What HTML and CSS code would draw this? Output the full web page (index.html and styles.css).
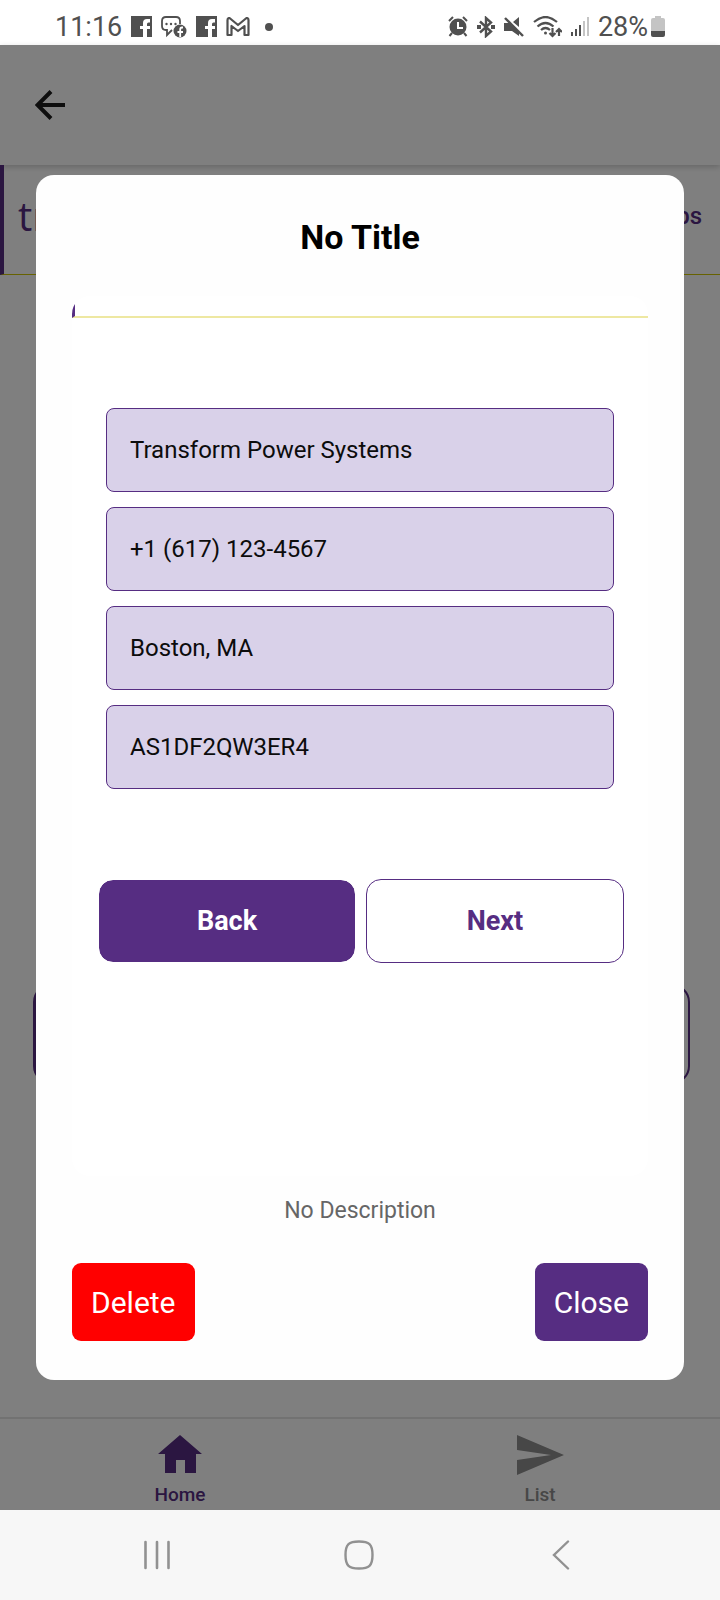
FILE: index.html
```html
<!DOCTYPE html>
<html lang="en">
<head>
<meta charset="utf-8">
<meta name="viewport" content="width=device-width, initial-scale=1">
<title>No Title</title>
<link rel="stylesheet" href="styles.css">
</head>
<body>
<div class="screen">
  <header class="status">
    <div class="status-group">
      <span class="status-text">11:16</span>
      <svg class="fb" width="21" height="21" viewBox="0 0 21 21"><path fill="#505050" d="M0 0h21v21h-5v-8h3v-3h-3V8q0-1.500 1.500-1.500H19V3h-3q-4 0-4 4v3H9v3h3v8H0z"/></svg>
      <svg width="26" height="22" viewBox="0 0 26 22"><path fill="none" stroke="#505050" stroke-width="1.800" d="M19 8V5q0-4-4-4H5Q1 1 1 5v5q0 4 4 4h1v5l5-5"/><g fill="#505050"><circle cx="5.500" cy="8" r="1.200"/><circle cx="10" cy="8" r="1.200"/><circle cx="14.500" cy="8" r="1.200"/><circle cx="19" cy="15" r="6.500"/></g><path fill="none" stroke="#fff" stroke-width="1.800" d="M22 11.500h-1q-1.800 0-1.800 2V21M16.500 16H22"/></svg>
      <svg class="fb" width="21" height="21" viewBox="0 0 21 21"><path fill="#505050" d="M0 0h21v21h-5v-8h3v-3h-3V8q0-1.500 1.500-1.500H19V3h-3q-4 0-4 4v3H9v3h3v8H0z"/></svg>
      <svg class="mail" width="24" height="20" viewBox="0 0 24 20"><path fill="none" stroke="#505050" stroke-width="2.200" stroke-linejoin="round" d="M1.500 18V3q0-2 2-2l8.500 7 8.500-7q2 0 2 2v15h-4V9L12 14 5.500 9v9z"/></svg>
      <svg class="dot" width="8" height="8" viewBox="0 0 8 8"><circle cx="4" cy="4" r="4" fill="#505050"/></svg>
    </div>
    <div class="status-group status-right">
      <svg width="20" height="21" viewBox="0 0 20 21"><circle cx="10" cy="11" r="8.500" fill="#505050"/><path fill="none" stroke="#505050" stroke-width="2" d="M1 5l4-4M15 1l4 4M4 17l-2.500 3M16 17l2.500 3"/><path fill="none" stroke="#fff" stroke-width="2" d="M10 6v6h5"/></svg>
      <svg width="18" height="22" viewBox="0 0 18 22"><path fill="none" stroke="#505050" stroke-width="2.400" d="M3 5.500l11 10-5 4.500V2l5 4.500-11 10"/><path fill="#505050" d="M0 9h4v4H0zM14 9h4v4h-4z"/></svg>
      <svg width="20" height="21" viewBox="0 0 20 21"><path fill="#505050" d="M0 7h5l10 9v4L8 15H0zM15 1v10L9 6z"/><path stroke="#505050" stroke-width="2.400" d="M1 2l18 18"/></svg>
      <svg class="wifi" width="29" height="22" viewBox="0 0 29 22"><g fill="none" stroke="#505050" stroke-width="2.200"><path d="M1 6q11.500-10 23 0M4.500 10.500q8-7 16 0M8 14q4.500-4 9 0"/><path d="M19.500 12v8M16.500 17l3 3 3-3M26 20v-7M23 16l3-3 3 3"/></g><circle cx="12.500" cy="17" r="1.500" fill="#505050"/></svg>
      <svg width="18" height="21" viewBox="0 0 18 21"><path fill="#505050" d="M0 16h2v4H0zM4 13h2v7H4zM8 9h2v11H8z"/><path fill="#c4c4c4" d="M12 5h2v15h-2zM16 1h2v19h-2z"/></svg>
      <span class="status-text">28%</span>
      <svg class="battery" width="14" height="21" viewBox="0 0 14 21"><path fill="#c4c4c4" d="M4 0h6v2h2q2 0 2 2v12H0V4q0-2 2-2h2z"/><path fill="#505050" d="M0 15h14v4q0 2-2 2H2q-2 0-2-2z"/></svg>
    </div>
  </header>

  <main class="app">
    <div class="topbar">
      <button class="icon-button" type="button" aria-label="Go back"><svg width="30" height="30" viewBox="0 0 30 30"><path fill="none" stroke="#1c1c1c" stroke-width="4" d="M30 15H3M16 1.500L2.500 15 16 28.500"/></svg></button>
    </div>
    <div class="brand"><span class="logo">tr</span><span class="brand-link">ps</span></div>
    <div class="page">
      <div class="page-actions"><span class="page-action solid"></span><span class="page-action"></span></div>
    </div>
    <nav class="tabs">
      <a class="tab active" href="#home"><svg width="44" height="38" viewBox="0 0 44 38"><path fill="currentColor" d="M22 0l22 19h-6v19H27V25h-9v13H7V19H0z"/></svg>Home</a>
      <a class="tab" href="#list"><svg width="48" height="40" viewBox="0 0 48 40"><path fill="currentColor" d="M1 0l47 20L1 40V25l34-5L1 15z"/></svg>List</a>
    </nav>

    <div class="overlay">
      <section class="modal" role="dialog" aria-labelledby="title">
        <h1 class="title" id="title">No Title</h1>
        <div class="preview">
          <div class="preview-head"></div>
          <form class="fields">
            <input class="field" type="text" aria-label="Company" value="Transform Power Systems">
            <input class="field" type="tel" aria-label="Phone" value="+1 (617) 123-4567">
            <input class="field" type="text" aria-label="Location" value="Boston, MA">
            <input class="field" type="text" aria-label="Serial number" value="AS1DF2QW3ER4">
          </form>
          <div class="steps">
            <button class="step back" type="button">Back</button>
            <button class="step next" type="button">Next</button>
          </div>
        </div>
        <p class="description">No Description</p>
        <div class="actions">
          <button class="action delete" type="button">Delete</button>
          <button class="action" type="button">Close</button>
        </div>
      </section>
    </div>
  </main>

  <footer class="system-nav">
    <button class="icon-button" type="button" aria-label="Recents"><svg width="30" height="30" viewBox="0 0 30 30"><path fill="none" stroke="#919191" stroke-width="2.600" stroke-linecap="round" d="M3.500 2v26M15 2v26M26.500 2v26"/></svg></button>
    <button class="icon-button" type="button" aria-label="Home"><svg width="30" height="30" viewBox="0 0 30 30"><path fill="none" stroke="#919191" stroke-width="2.400" d="M15 1.500C25 1.500 28.500 4 28.500 15S25 28.500 15 28.500 1.500 26 1.500 15 5 1.500 15 1.500z"/></svg></button>
    <button class="icon-button" type="button" aria-label="Back"><svg width="30" height="30" viewBox="0 0 30 30"><path fill="none" stroke="#919191" stroke-width="2.400" stroke-linecap="round" d="M22 1.500L8 15l14 13.500"/></svg></button>
  </footer>
</div>
</body>
</html>
```

FILE: styles.css
```css
:root {
  --purple: #562d82;
  --ink: #505050;
}

* {
  box-sizing: border-box;
}

body {
  margin: 0;
  font-family: Roboto, "Liberation Sans", sans-serif;
  background: #fff;
}

button,
input {
  font: inherit;
}

.screen {
  display: flex;
  flex-direction: column;
  min-height: 100vh;
}

.status {
  display: flex;
  justify-content: space-between;
  height: 45px;
  padding: 8px 55px 0;
  color: var(--ink);
}

.status-group {
  display: flex;
  align-items: center;
  gap: 9px;
}

.status-text {
  font-size: 27px;
  line-height: 36px;
}

.dot {
  margin-left: 6px;
}

.battery {
  margin-left: -6px;
}

.app {
  position: relative;
  display: flex;
  flex-direction: column;
  flex: 1;
}

.topbar {
  display: flex;
  align-items: center;
  height: 120px;
  padding-left: 35px;
  box-shadow: 0 2px 6px rgba(0, 0, 0, 0.2);
}

.icon-button {
  display: flex;
  padding: 0;
  border: 0;
  background: none;
}

.brand {
  display: flex;
  align-items: center;
  justify-content: space-between;
  height: 110px;
  padding: 0 18px 8px 14px;
  border-left: 4px solid var(--purple);
  border-bottom: 1px solid #cfc400;
  color: var(--purple);
}

.logo {
  font-family: "Open Sans", sans-serif;
  font-size: 40px;
  font-weight: 500;
}

.brand-link {
  font-size: 24px;
  font-weight: 500;
}

.page {
  flex: 1;
  padding: 709px 30px 0 33px;
}

.page-actions {
  display: grid;
  grid-template-columns: 1fr 1fr;
  gap: 12px;
}

.page-action {
  height: 100px;
  border: 2px solid var(--purple);
  border-radius: 18px;
}

.solid {
  background: var(--purple);
}

.tabs {
  display: grid;
  grid-template-columns: 1fr 1fr;
  height: 93px;
  border-top: 2px solid #e4e4e4;
}

.tab {
  display: flex;
  flex-direction: column;
  align-items: center;
  justify-content: space-between;
  padding: 16px 0 4px;
  color: #8e8e8e;
  font-size: 19px;
  font-weight: 500;
  line-height: 22px;
  text-decoration: none;
}

.active {
  color: var(--purple);
}

.overlay {
  position: absolute;
  inset: 0;
  display: flex;
  align-items: center;
  justify-content: center;
  background: rgba(0, 0, 0, 0.5);
}

.modal {
  width: 90%;
  padding: 36px 36px 39px;
  border-radius: 18px;
  background: #fefefe;
}

.title {
  margin: 0 0 33px;
  color: #000;
  font-size: 34px;
  line-height: 52px;
  text-align: center;
}

.preview {
  overflow: hidden;
  padding-bottom: 213px;
  border-radius: 18px;
  background: #fff;
}

.preview-head {
  height: 22px;
  border-left: 3px solid var(--purple);
  border-bottom: 2px solid #eee8a2;
}

.fields {
  display: grid;
  gap: 15px;
  padding: 90px 34px;
}

.field {
  width: 100%;
  height: 84px;
  padding: 0 23px;
  border: 1px solid var(--purple);
  border-radius: 8px;
  background: #d9d1e9;
  color: #0c0c0c;
  font-size: 24px;
}

.steps {
  display: grid;
  grid-template-columns: 1fr 1fr;
  gap: 10px;
  padding: 0 24px 0 26px;
}

.step {
  height: 84px;
  border: 1px solid var(--purple);
  border-radius: 15px;
  background: #fff;
  color: var(--purple);
  font-size: 27px;
  font-weight: 700;
}

.back {
  border-color: #fff;
  background: var(--purple);
  background-clip: padding-box;
  color: #fff;
}

.description {
  margin: 20px 0 37px;
  color: #666;
  font-size: 23px;
  line-height: 30px;
  text-align: center;
}

.actions {
  display: flex;
  justify-content: space-between;
}

.action {
  height: 78px;
  padding: 0 19px;
  border: 0;
  border-radius: 9px;
  background: var(--purple);
  color: #fff;
  font-size: 30px;
}

.delete {
  background: #f00;
}

.system-nav {
  display: flex;
  align-items: center;
  justify-content: space-between;
  height: 90px;
  padding: 0 144px 0 142px;
  background: #f7f7f7;
}
```
